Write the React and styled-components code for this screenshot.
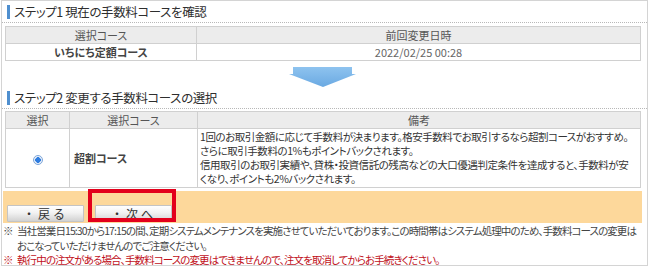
import React from "react";
import styled, { createGlobalStyle } from "styled-components";

const GlobalStyle = createGlobalStyle`
  html, body {
    margin: 0;
    padding: 0;
    background: #ffffff;
  }
  body {
    font-family: "Noto Sans CJK JP", "Noto Sans", sans-serif;
    font-feature-settings: "palt";
    color: #333333;
  }
`;

const Frame = styled.div`
  position: relative;
  box-sizing: border-box;
  width: 647px;
  height: 266px;
  margin-left: 1px;
  border: 1px solid #d4d4d4;
`;

const StepTitle = styled.h2`
  display: flex;
  align-items: center;
  gap: 4px;
  margin: 0;
  padding-left: 5px;
  font-size: 12.5px;
  font-weight: normal;
  letter-spacing: -0.4px;
  color: #2e2e2e;
  border-bottom: 1px dotted #b8b8b8;
  box-sizing: border-box;
  height: 22px;
`;

const Bar = styled.span`
  display: block;
  width: 3px;
  height: 14px;
  background: #4f8fcf;
`;

const Table = styled.table`
  width: 636px;
  margin: ${(p) => p.$top || 2}px 0 0 3px;
  border-collapse: collapse;
  font-size: 11px;
  table-layout: fixed;
`;

const Th = styled.th`
  height: 16px;
  padding: 0;
  border: 1px solid #d0d0d0;
  background: #ececec;
  font-weight: normal;
  color: #555;
  text-align: center;
  width: ${(p) => (p.$w ? `${p.$w}px` : "auto")};
`;

const Td = styled.td`
  height: ${(p) => p.$h || 16}px;
  padding: ${(p) => (p.$left ? "0 4px" : "0")};
  border: 1px solid #d0d0d0;
  text-align: ${(p) => (p.$left ? "left" : "center")};
  font-weight: ${(p) => (p.$bold ? "bold" : "normal")};
  color: ${(p) => (p.$bold ? "#444" : "#666")};
  white-space: nowrap;
`;

const Remarks = styled.td`
  padding: 1px 2px;
  border: 1px solid #d0d0d0;
  font-size: 10.5px;
  letter-spacing: -0.45px;
  line-height: 14px;
  color: #333;
  white-space: nowrap;
  vertical-align: middle;
`;

const Radio = styled.span`
  display: inline-block;
  box-sizing: border-box;
  width: 10px;
  height: 10px;
  border-radius: 50%;
  border: 1px solid #7fa7d9;
  background: radial-gradient(circle, #2f7de0 0 2.6px, #e7effa 3px);
  vertical-align: middle;
`;

const ArrowRow = styled.div`
  display: flex;
  justify-content: center;
  height: 26px;
  padding-top: 6px;
  box-sizing: border-box;
  padding-right: 4px;
`;

const ButtonBar = styled.div`
  display: flex;
  gap: 11px;
  margin: 3px 5px 0 1px;
  height: 32px;
  padding: 14px 0 0 4px;
  box-sizing: border-box;
  background: #fdd89b;
`;

const Button = styled.button`
  width: 77px;
  height: 17px;
  padding: 0;
  border: 1px solid #c4c4c4;
  border-radius: 1px;
  background: linear-gradient(#ffffff, #f2f2f2 45%, #d2d2d2);
  font-family: inherit;
  font-size: 12px;
  line-height: 15px;
  letter-spacing: 3px;
  color: #333;
  text-align: center;
`;

const Highlight = styled.div`
  position: absolute;
  left: 86px;
  top: 188px;
  width: 88px;
  height: 33px;
  box-sizing: border-box;
  border: 4px solid #e3001b;
  pointer-events: none;
`;

const Notes = styled.div`
  padding: 1px 0 0 1px;
  font-size: 10.5px;
  letter-spacing: -0.9px;
  line-height: 14.5px;
`;

const Note = styled.div`
  display: flex;
  color: ${(p) => (p.$red ? "#c0101a" : "#444")};
  white-space: nowrap;
`;

const Mark = styled.span`
  flex: none;
  width: 14px;
`;

const DownArrow = () => (
  <svg width="68" height="20" viewBox="0 0 68 20">
    <defs>
      <linearGradient id="ag" x1="0" y1="0" x2="0" y2="1">
        <stop offset="0" stopColor="#8ec3ef" />
        <stop offset="1" stopColor="#6aa9e2" />
      </linearGradient>
    </defs>
    <polygon points="4,0 63,0 63,7 67,7 34,20 0,7 4,7" fill="url(#ag)" />
  </svg>
);

export default function App() {
  return (
    <>
      <GlobalStyle />
      <Frame>
        <StepTitle>
          <Bar />
          ステップ1 現在の手数料コースを確認
        </StepTitle>
        <Table $top={3}>
          <thead>
            <tr>
              <Th $w={190}>選択コース</Th>
              <Th>前回変更日時</Th>
            </tr>
          </thead>
          <tbody>
            <tr>
              <Td $bold>いちにち定額コース</Td>
              <Td>2022/02/25 00:28</Td>
            </tr>
          </tbody>
        </Table>

        <ArrowRow>
          <DownArrow />
        </ArrowRow>

        <StepTitle>
          <Bar />
          ステップ2 変更する手数料コースの選択
        </StepTitle>
        <Table>
          <thead>
            <tr>
              <Th $w={63}>選択</Th>
              <Th $w={127}>選択コース</Th>
              <Th>備考</Th>
            </tr>
          </thead>
          <tbody>
            <tr>
              <Td $h={56}>
                <Radio />
              </Td>
              <Td $h={56} $left $bold>
                超割コース
              </Td>
              <Remarks>
                1回のお取引金額に応じて手数料が決まります。格安手数料でお取引するなら超割コースがおすすめ。
                <br />
                さらに取引手数料の1%もポイントバックされます。
                <br />
                信用取引のお取引実績や、貸株・投資信託の残高などの大口優遇判定条件を達成すると、手数料が安
                <br />
                くなり、ポイントも2%バックされます。
              </Remarks>
            </tr>
          </tbody>
        </Table>

        <ButtonBar>
          <Button type="button">・戻る</Button>
          <Button type="button">・次へ</Button>
        </ButtonBar>

        <Notes>
          <Note>
            <Mark>※</Mark>
            <span>
              当社営業日15:30から17:15の間、定期システムメンテナンスを実施させていただいております。この時間帯はシステム処理中のため、手数料コースの変更は
              <br />
              おこなっていただけませんのでご注意ください。
            </span>
          </Note>
          <Note $red>
            <Mark>※</Mark>
            <span>
              執行中の注文がある場合、手数料コースの変更はできませんので、注文を取消してからお手続きください。
            </span>
          </Note>
        </Notes>

        <Highlight />
      </Frame>
    </>
  );
}
